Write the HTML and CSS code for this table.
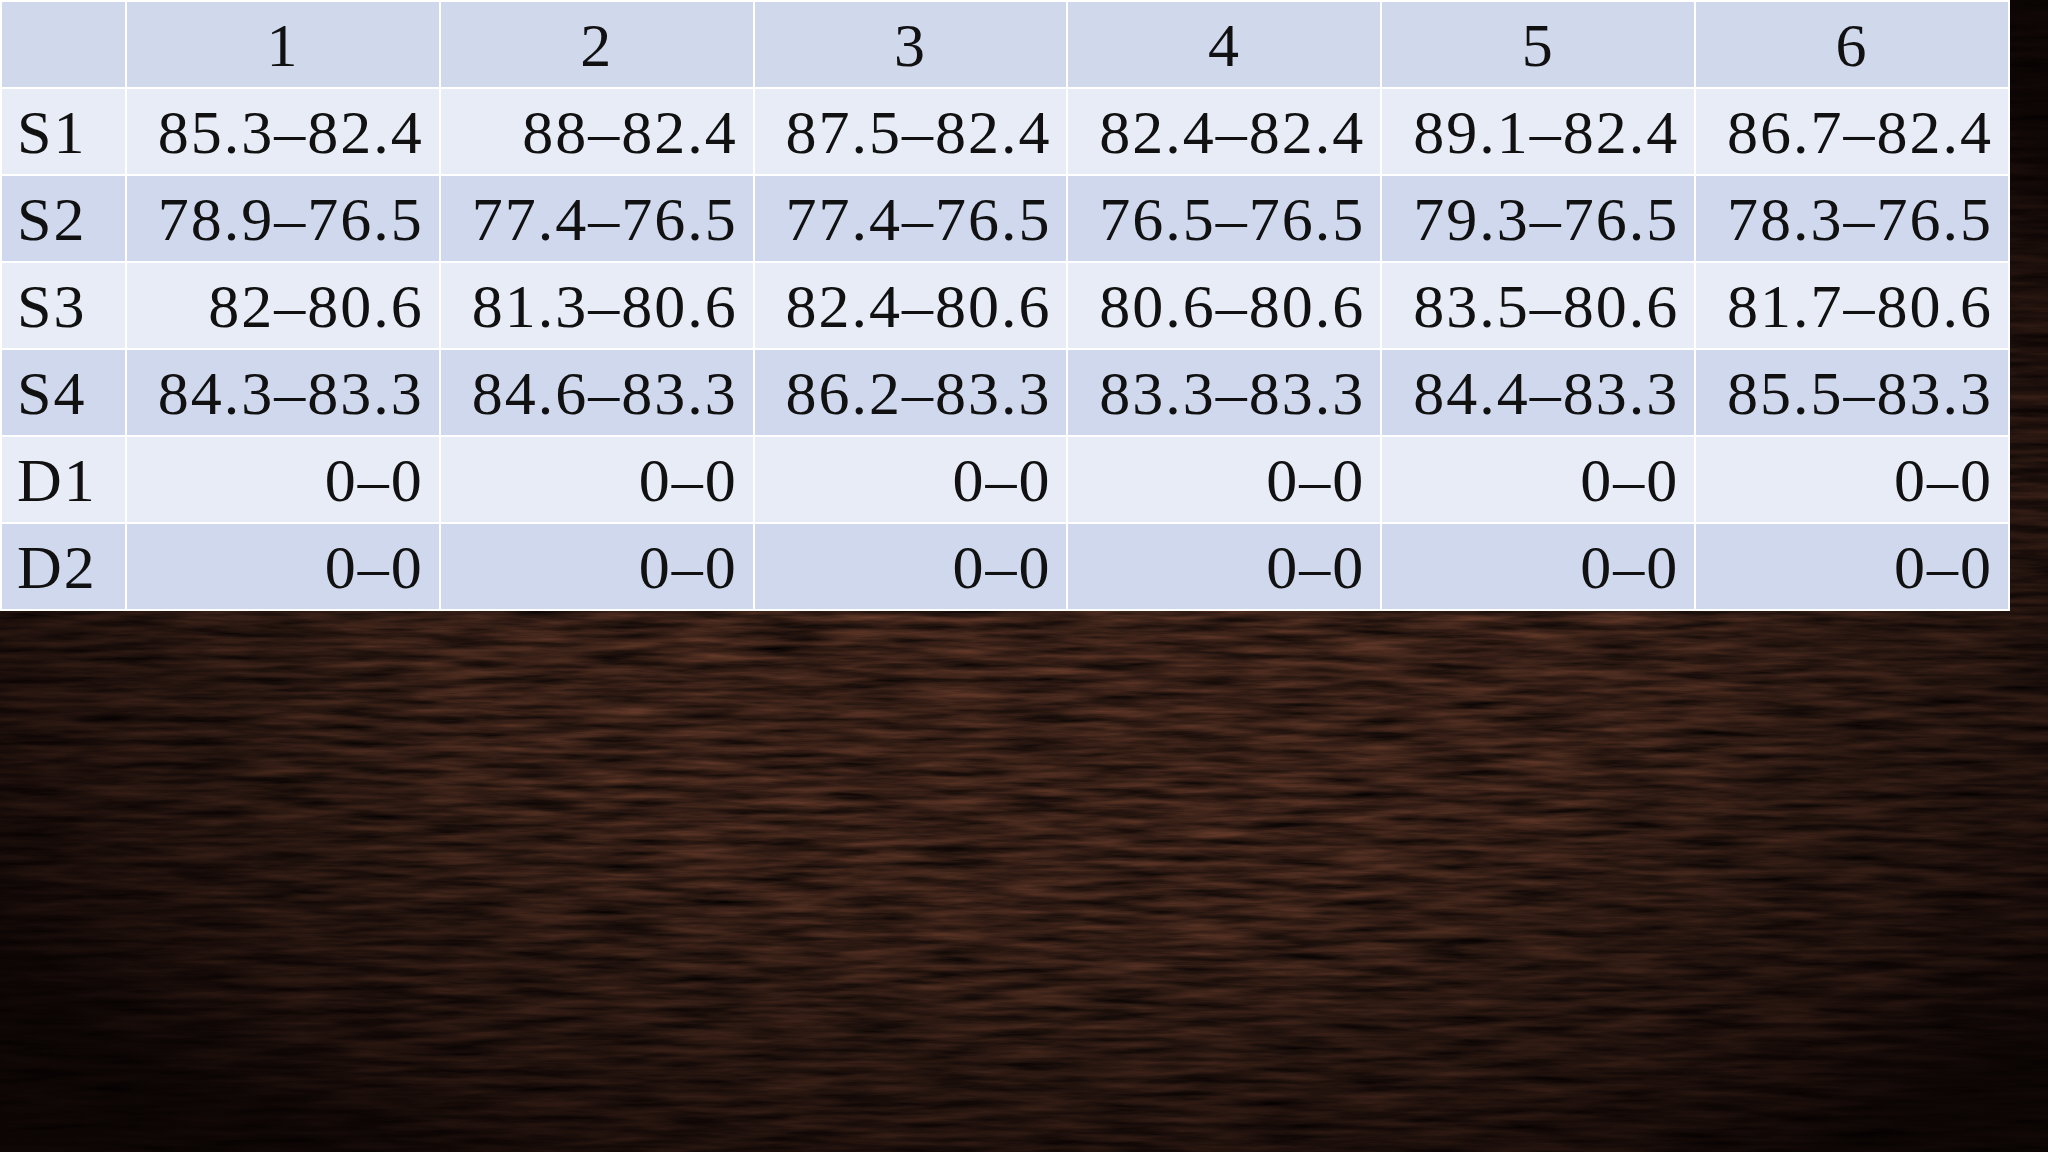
FILE: index.html
```html
<!DOCTYPE html>
<html>
<head>
<meta charset="utf-8">
<link rel="stylesheet" href="styles.css">
</head>
<body>
<div class="slide">
  <svg class="wood" width="2048" height="1152" viewBox="0 0 2048 1152" aria-hidden="true">
    <defs>
      <filter id="grain" x="0" y="0" width="100%" height="100%" color-interpolation-filters="sRGB">
        <feTurbulence type="fractalNoise" baseFrequency="0.012 0.13" numOctaves="4" seed="7" result="n"/>
        <feColorMatrix type="matrix" in="n"
          values="0.46 0 0 0 -0.01
                  0.27 0 0 0 -0.01
                  0.19 0 0 0 -0.005
                  0 0 0 0 1"/>
      </filter>
      <radialGradient id="vig" cx="0.52" cy="0.5" r="0.62">
        <stop offset="0" stop-color="#000" stop-opacity="0"/>
        <stop offset="0.5" stop-color="#000" stop-opacity="0.08"/>
        <stop offset="0.85" stop-color="#060101" stop-opacity="0.55"/>
        <stop offset="1" stop-color="#050101" stop-opacity="0.85"/>
      </radialGradient>
      <radialGradient id="knot" cx="0.5" cy="1" r="0.5">
        <stop offset="0" stop-color="#000" stop-opacity="0.45"/>
        <stop offset="1" stop-color="#000" stop-opacity="0"/>
      </radialGradient>
    </defs>
    <rect width="2048" height="1152" fill="#2b1812"/>
    <rect width="2048" height="1152" filter="url(#grain)"/>
    <rect width="2048" height="1152" fill="url(#vig)"/>
    <ellipse cx="1000" cy="1152" rx="260" ry="300" fill="url(#knot)"/>
  </svg>
  <table class="scores">
    <thead>
      <tr><th class="label"></th><th>1</th><th>2</th><th>3</th><th>4</th><th>5</th><th>6</th></tr>
    </thead>
    <tbody>
      <tr class="odd"><td class="label">S1</td><td>85.3–82.4</td><td>88–82.4</td><td>87.5–82.4</td><td>82.4–82.4</td><td>89.1–82.4</td><td>86.7–82.4</td></tr>
      <tr class="even"><td class="label">S2</td><td>78.9–76.5</td><td>77.4–76.5</td><td>77.4–76.5</td><td>76.5–76.5</td><td>79.3–76.5</td><td>78.3–76.5</td></tr>
      <tr class="odd"><td class="label">S3</td><td>82–80.6</td><td>81.3–80.6</td><td>82.4–80.6</td><td>80.6–80.6</td><td>83.5–80.6</td><td>81.7–80.6</td></tr>
      <tr class="even"><td class="label">S4</td><td>84.3–83.3</td><td>84.6–83.3</td><td>86.2–83.3</td><td>83.3–83.3</td><td>84.4–83.3</td><td>85.5–83.3</td></tr>
      <tr class="odd"><td class="label">D1</td><td>0–0</td><td>0–0</td><td>0–0</td><td>0–0</td><td>0–0</td><td>0–0</td></tr>
      <tr class="even"><td class="label">D2</td><td>0–0</td><td>0–0</td><td>0–0</td><td>0–0</td><td>0–0</td><td>0–0</td></tr>
    </tbody>
  </table>
</div>
</body>
</html>
```
FILE: styles.css
```css
html, body {
  margin: 0;
  padding: 0;
  width: 2048px;
  height: 1152px;
  overflow: hidden;
}

.slide {
  position: relative;
  width: 2048px;
  height: 1152px;
  background: #2b1812;
}

.wood {
  position: absolute;
  left: 0;
  top: 0;
  display: block;
}

.scores {
  position: relative;
  border-collapse: separate;
  border-spacing: 2px;
  background: #ffffff;
  font-family: "Liberation Serif", "Times New Roman", serif;
  font-size: 62px;
  letter-spacing: 2px;
  color: #111111;
  table-layout: fixed;
  width: 2010px;
}

.scores th,
.scores td {
  height: 85px;
  padding: 0 15px 0 15px;
  font-weight: normal;
  line-height: 1;
  white-space: nowrap;
  box-sizing: border-box;
}

.scores th {
  background: #d0d8ec;
  text-align: center;
  padding: 0;
}

.scores th.label,
.scores td.label {
  width: 123px;
  text-align: left;
}

.scores td {
  text-align: right;
  width: 312px;
}

.scores tr.odd td {
  background: #e8ecf6;
}

.scores tr.even td {
  background: #cfd8ed;
}
```
